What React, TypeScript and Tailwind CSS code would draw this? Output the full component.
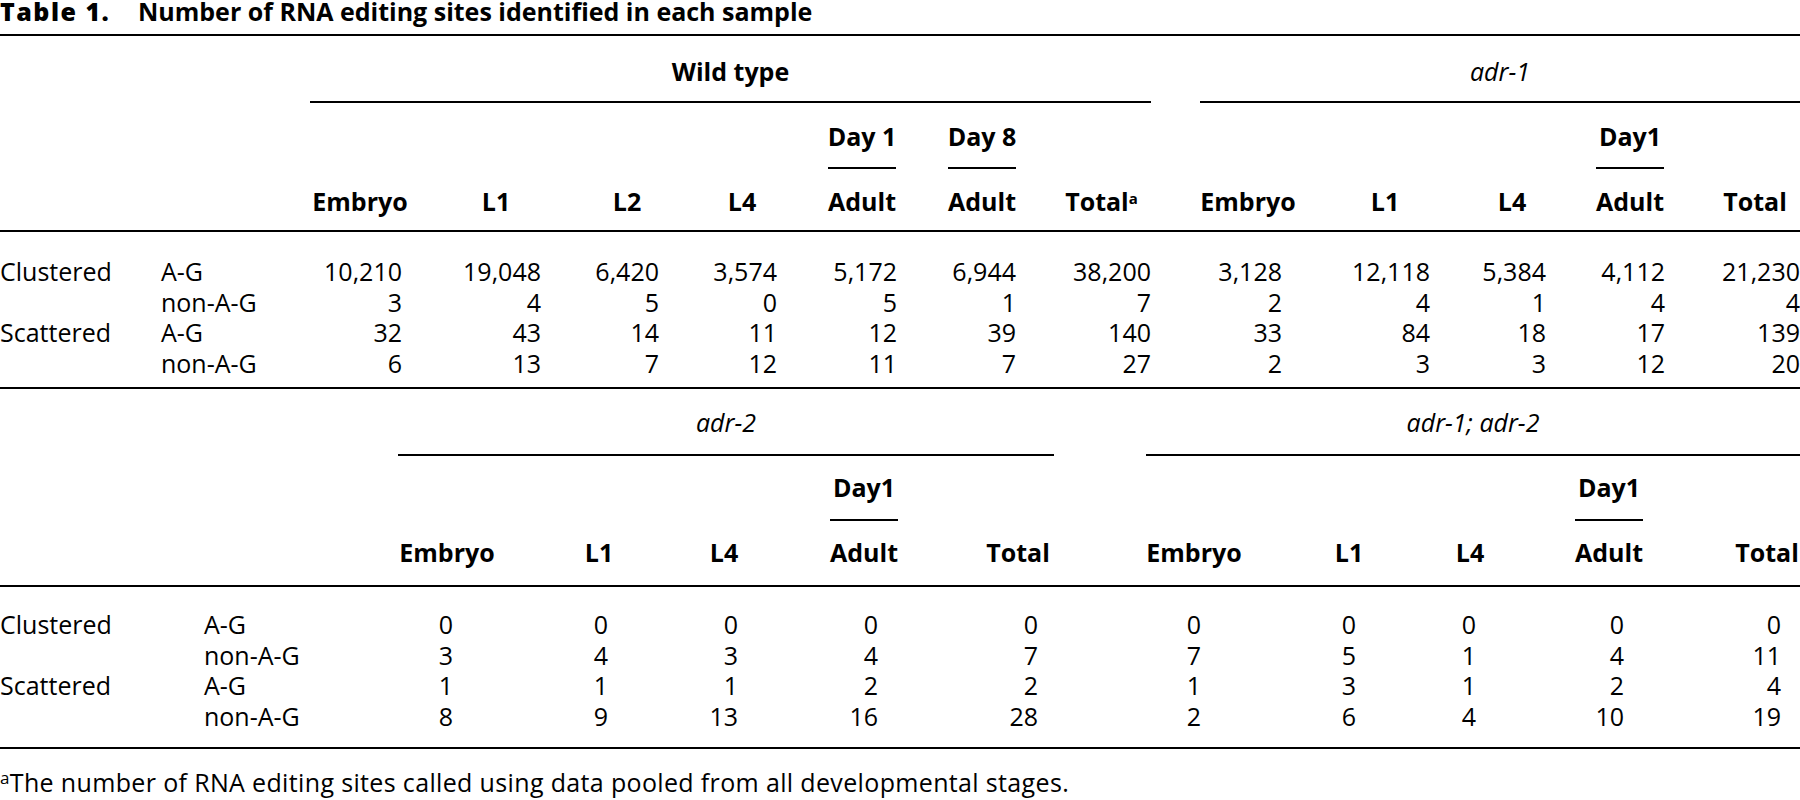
import { Fragment } from 'react';
import { clsx } from 'clsx';

/**
 * Table 1 — number of RNA editing sites identified in each sample.
 * Two stacked blocks (wild type / adr-1, then adr-2 / adr-1; adr-2),
 * separated by full-width rules. Headers are centred over their column,
 * numbers are right-aligned with a per-column inset.
 */

interface Col {
  head: string;
  day?: string;
  sup?: string;
  w: string;
  pr: string;
  vals: string[];
}

interface Group {
  title: string;
  italic?: boolean;
  cols: Col[];
}

interface TableSpec {
  id: string;
  l1: string;
  l2: string;
  gap: string;
  groups: [Group, Group];
  spanPt: string;
  dayH: string;
  dayPt: string;
  headH: string;
  headPt: string;
  blankH: string;
  bodyPt: string;
  bodyPb: string;
}

const ROW_LABELS: ReadonlyArray<[string, string]> = [
  ['Clustered', 'A-G'],
  ['', 'non-A-G'],
  ['Scattered', 'A-G'],
  ['', 'non-A-G'],
];

const TABLES: ReadonlyArray<TableSpec> = [
  {
    id: 'top',
    l1: 'w-[161px]',
    l2: 'w-[149px]',
    gap: 'w-[49px]',
    spanPt: 'pt-[20px]',
    dayH: 'h-[64px]',
    dayPt: 'pt-[18px]',
    headH: 'h-[61px]',
    headPt: 'pt-[17px]',
    blankH: 'h-[66px]',
    bodyPt: 'pt-[24px]',
    bodyPb: 'pb-[9px]',
    groups: [
      {
        title: 'Wild type',
        cols: [
          { head: 'Embryo', w: 'w-[100px]', pr: 'pr-[8px]', vals: ['10,210', '3', '32', '6'] },
          { head: 'L1', w: 'w-[172px]', pr: 'pr-[41px]', vals: ['19,048', '4', '43', '13'] },
          { head: 'L2', w: 'w-[90px]', pr: 'pr-[13px]', vals: ['6,420', '5', '14', '7'] },
          { head: 'L4', w: 'w-[140px]', pr: 'pr-[35px]', vals: ['3,574', '0', '11', '12'] },
          { head: 'Adult', day: 'Day 1', w: 'w-[100px]', pr: 'pr-[15px]', vals: ['5,172', '5', '12', '11'] },
          { head: 'Adult', day: 'Day 8', w: 'w-[140px]', pr: 'pr-[36px]', vals: ['6,944', '1', '39', '7'] },
          { head: 'Total', sup: 'a', w: 'w-[99px]', pr: 'pr-[0px]', vals: ['38,200', '7', '140', '27'] },
        ],
      },
      {
        title: 'adr-1',
        italic: true,
        cols: [
          { head: 'Embryo', w: 'w-[96px]', pr: 'pr-[14px]', vals: ['3,128', '2', '33', '2'] },
          { head: 'L1', w: 'w-[178px]', pr: 'pr-[44px]', vals: ['12,118', '4', '84', '3'] },
          { head: 'L4', w: 'w-[76px]', pr: 'pr-[4px]', vals: ['5,384', '1', '18', '3'] },
          { head: 'Adult', day: 'Day1', w: 'w-[160px]', pr: 'pr-[45px]', vals: ['4,112', '4', '17', '12'] },
          { head: 'Total', w: 'w-[90px]', pr: 'pr-[0px]', vals: ['21,230', '4', '139', '20'] },
        ],
      },
    ],
  },
  {
    id: 'bottom',
    l1: 'w-[204px]',
    l2: 'w-[194px]',
    gap: 'w-[92px]',
    spanPt: 'pt-[18px]',
    dayH: 'h-[63px]',
    dayPt: 'pt-[16px]',
    headH: 'h-[64px]',
    headPt: 'pt-[16px]',
    blankH: 'h-[65px]',
    bodyPt: 'pt-[22px]',
    bodyPb: 'pb-[16px]',
    groups: [
      {
        title: 'adr-2',
        italic: true,
        cols: [
          { head: 'Embryo', w: 'w-[98px]', pr: 'pr-[43px]', vals: ['0', '3', '1', '8'] },
          { head: 'L1', w: 'w-[206px]', pr: 'pr-[94px]', vals: ['0', '4', '1', '9'] },
          { head: 'L4', w: 'w-[44px]', pr: 'pr-[8px]', vals: ['0', '3', '1', '13'] },
          { head: 'Adult', day: 'Day1', w: 'w-[236px]', pr: 'pr-[104px]', vals: ['0', '4', '2', '16'] },
          { head: 'Total', w: 'w-[72px]', pr: 'pr-[16px]', vals: ['0', '7', '2', '28'] },
        ],
      },
      {
        title: 'adr-1; adr-2',
        italic: true,
        cols: [
          { head: 'Embryo', w: 'w-[96px]', pr: 'pr-[41px]', vals: ['0', '7', '1', '2'] },
          { head: 'L1', w: 'w-[214px]', pr: 'pr-[100px]', vals: ['0', '5', '3', '6'] },
          { head: 'L4', w: 'w-[28px]', pr: 'pr-[8px]', vals: ['0', '1', '1', '4'] },
          { head: 'Adult', day: 'Day1', w: 'w-[250px]', pr: 'pr-[110px]', vals: ['0', '4', '2', '10'] },
          { head: 'Total', w: 'w-[66px]', pr: 'pr-[19px]', vals: ['0', '11', '4', '19'] },
        ],
      },
    ],
  },
];

function Rule() {
  return <div className="h-[2px] w-full bg-black" />;
}

function HeadCell({ col, t }: { col: Col; t: TableSpec }) {
  return (
    <div className={clsx('flex shrink-0 flex-col items-center font-bold', col.w)}>
      <div className="flex flex-col whitespace-nowrap">
        {col.day ? (
          <>
            <div className={clsx('text-center', t.dayH, t.dayPt)}>{col.day}</div>
            <div className="h-[2px] bg-black" />
          </>
        ) : (
          <div className={t.blankH} />
        )}
        <div className={clsx('text-center', t.headH, t.headPt)}>
          {col.head}
          {col.sup && <sup className="text-[15px]">{col.sup}</sup>}
        </div>
      </div>
    </div>
  );
}

function DataTable({ t }: { t: TableSpec }) {
  return (
    <div>
      <div className="flex leading-[30px]">
        <div className={clsx('shrink-0', t.l1)} />
        <div className={clsx('shrink-0', t.l2)} />
        {t.groups.map((g, gi) => (
          <Fragment key={g.title}>
            {gi === 1 && <div className={clsx('shrink-0', t.gap)} />}
            <div className="flex flex-col">
              <div
                className={clsx(
                  'h-[67px] border-b-2 border-black text-center',
                  t.spanPt,
                  g.italic ? 'italic' : 'font-bold',
                )}
              >
                {g.title}
              </div>
              <div className="flex">
                {g.cols.map((c, ci) => (
                  <HeadCell key={ci} col={c} t={t} />
                ))}
              </div>
            </div>
          </Fragment>
        ))}
      </div>
      <Rule />
      <div className={clsx('flex flex-col', t.bodyPt, t.bodyPb)}>
        {ROW_LABELS.map(([a, b], ri) => (
          <div key={ri} className="flex leading-[30.5px]">
            <div className={clsx('shrink-0', t.l1)}>{a}</div>
            <div className={clsx('shrink-0', t.l2)}>{b}</div>
            {t.groups.map((g, gi) => (
              <Fragment key={g.title}>
                {gi === 1 && <div className={clsx('shrink-0', t.gap)} />}
                {g.cols.map((c, ci) => (
                  <div key={ci} className={clsx('shrink-0 text-right', c.w, c.pr)}>
                    {c.vals[ri]}
                  </div>
                ))}
              </Fragment>
            ))}
          </div>
        ))}
      </div>
      <Rule />
    </div>
  );
}

export default function App() {
  return (
    <div className="h-[800px] w-[1800px] overflow-hidden bg-white font-['Open_Sans',sans-serif] text-[25px] text-black">
      <div className="flex h-[34px] whitespace-nowrap font-bold leading-[22px]">
        <span className="w-[138px] shrink-0 font-extrabold tracking-[1.5px]">Table 1.</span>
        <span>Number of RNA editing sites identified in each sample</span>
      </div>
      <Rule />
      {TABLES.map((t) => (
        <DataTable key={t.id} t={t} />
      ))}
      <p className="pt-[18px] leading-[30px] tracking-[0.35px]">
        <sup className="text-[17px]">a</sup>The number of RNA editing sites called using data pooled
        from all developmental stages.
      </p>
    </div>
  );
}
